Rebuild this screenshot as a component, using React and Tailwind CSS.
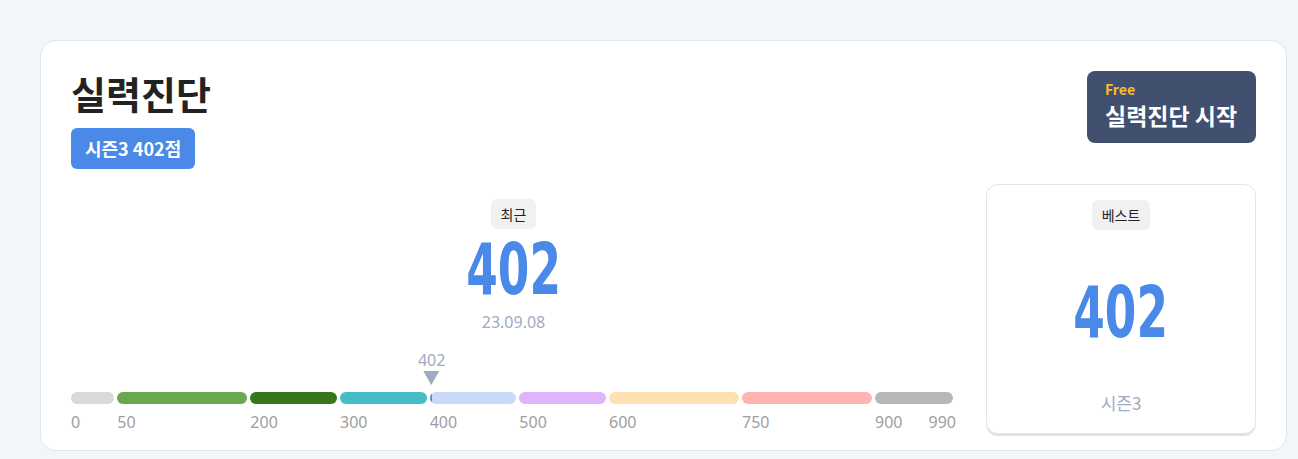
import React from 'react';

const segments = [
  { from: 0, grow: 'grow-[50]', color: 'bg-[#d9d9d9]' },
  { from: 50, grow: 'grow-[150]', color: 'bg-[#6aa84f]' },
  { from: 200, grow: 'grow-[100]', color: 'bg-[#38761d]' },
  { from: 300, grow: 'grow-[100]', color: 'bg-[#45bcc6]' },
  { from: 400, grow: 'grow-[100]', color: 'bg-[#c9daf8]', marker: 402 },
  { from: 500, grow: 'grow-[100]', color: 'bg-[#e0b4fb]' },
  { from: 600, grow: 'grow-[150]', color: 'bg-[#ffe0b2]' },
  { from: 750, grow: 'grow-[150]', color: 'bg-[#ffb3b3]' },
  { from: 900, grow: 'grow-[90]', color: 'bg-[#b7b7b7]', to: 990 },
];

const bigNum = "font-['DejaVu_Sans_Condensed',sans-serif] font-bold text-[#4a89e8] leading-none text-[72px] scale-x-[0.7]";

function ScoreBar() {
  return (
    <div className="flex w-full gap-[3px] pr-[3px]">
      {segments.map((s) => (
        <div key={s.from} className={`${s.grow} basis-0 flex flex-col`}>
          <div className="relative">
            {s.marker && (
              <div className="absolute bottom-full mb-[7px] left-[2px] -translate-x-1/2 flex flex-col items-center">
                <span className="text-base leading-5 text-[#a0aac0]">{s.marker}</span>
                <svg width="16" height="14" viewBox="0 0 16 14" className="mt-[1px]">
                  <path d="M0 0 H16 L8 14 Z" fill="#a0aac0" />
                </svg>
              </div>
            )}
            <div className={`h-3 rounded-full overflow-hidden ${s.color}`}>
              {s.marker && <div className="h-full w-[2px] bg-[#4a89e8]" />}
            </div>
          </div>
          <div className="flex justify-between mt-[8px] text-base leading-5 text-[#9e9e9e]">
            <span>{s.from}</span>
            {s.to && <span className="-mr-[3px]">{s.to}</span>}
          </div>
        </div>
      ))}
    </div>
  );
}

export default function App() {
  return (
    <div className="min-h-[459px] bg-[#f3f6f9] pt-10 pl-10 pr-[11px] font-['Noto_Sans','Noto_Sans_CJK_KR',sans-serif]">
      <div className="bg-white border border-[#e3e5ea] rounded-2xl pt-[30px] px-[30px] pb-4">
        {/* header */}
        <div className="flex justify-between items-start">
          <div className="flex flex-col items-start">
            <h1 className="text-[38px] leading-[44px] font-bold text-[#222] font-['Noto_Sans_CJK_KR',sans-serif]">실력진단</h1>
            <span className="mt-[13px] h-[41px] px-3.5 flex items-center rounded-md bg-[#4a89e8] text-white text-[18px] font-bold font-['Noto_Sans_CJK_KR',sans-serif]">시즌3 402점</span>
          </div>
          <button className="w-[169px] h-[72px] rounded-lg bg-[#41506e] flex flex-col justify-start items-start pt-[8px] px-[18px] font-['Noto_Sans_CJK_KR',sans-serif]">
            <span className="text-sm leading-5 font-bold text-[#f7bd2b]">Free</span>
            <span className="text-[23px] leading-[32px] font-bold text-white whitespace-nowrap">실력진단 시작</span>
          </button>
        </div>

        {/* body */}
        <div className="flex gap-[30px] mt-[15px]">
          <div className="flex-1 flex flex-col">
            <div className="flex flex-col items-center pt-[15px]">
              <span className="px-2.5 py-[5px] rounded-md bg-[#f1f1f1] text-sm leading-5 text-[#222] font-['Noto_Sans_CJK_KR',sans-serif]">최근</span>
              <span className={`${bigNum} mt-1`}>402</span>
              <span className="mt-[7px] text-base leading-5 text-[#a0aac0]">23.09.08</span>
            </div>
            <div className="mt-[60px]">
              <ScoreBar />
            </div>
          </div>

          <div className="w-[270px] h-[250px] shrink-0 border border-[#e3e4e8] rounded-xl shadow-[0_2px_0_#dfe0e6] flex flex-col items-center pt-[15px] pb-[20px]">
            <span className="px-2.5 py-[5px] rounded-md bg-[#f1f1f1] text-sm leading-5 text-[#222] font-['Noto_Sans_CJK_KR',sans-serif]">베스트</span>
            <div className="flex-1 flex items-center">
              <span className={bigNum}>402</span>
            </div>
            <span className="text-[17px] leading-5 text-[#a0aac0] font-['Noto_Sans_CJK_KR',sans-serif]">시즌3</span>
          </div>
        </div>
      </div>
    </div>
  );
}
